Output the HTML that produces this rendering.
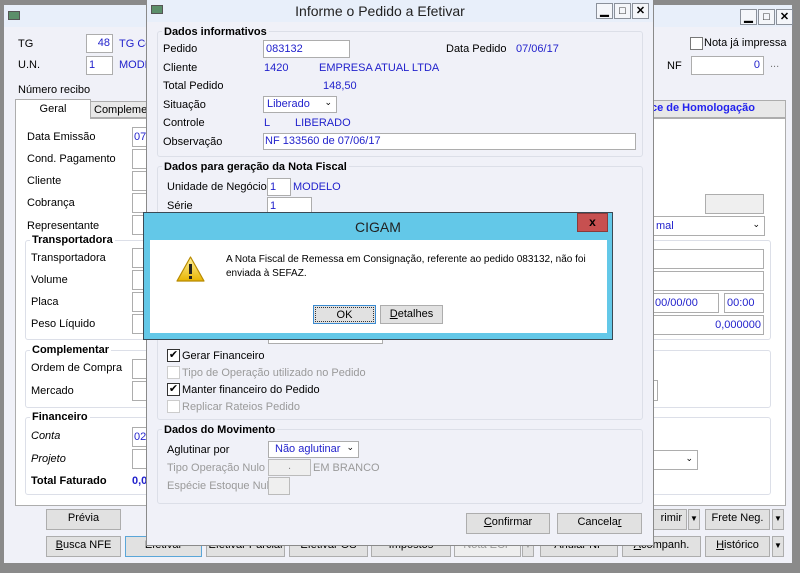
<!DOCTYPE html>
<html><head><meta charset="utf-8"><style>
*{box-sizing:border-box;margin:0;padding:0}
body{width:800px;height:573px;overflow:hidden;background:#8a8a8a;font-family:"Liberation Sans",sans-serif;font-size:11px;color:#000;position:relative}
.a{position:absolute;white-space:nowrap}
.b{color:#2222cc}
.g{color:#9a9a9a}
.in{position:absolute;background:#fff;border:1px solid #adadad}
.btn{position:absolute;background:#e1e1e1;border:1px solid #adadad;text-align:center;line-height:17px;font-size:11px}
.grp{position:absolute;border:1px solid #dcdfe8;border-radius:3px}
.gl{position:absolute;font-weight:bold;font-size:11px;padding:0 2px;background:inherit}
.wc{position:absolute;width:17px;height:16px;border:1px solid #8a909a;background:#f4f6fa;font-size:11px;font-weight:bold;text-align:center;line-height:14px;color:#000}
.cb{position:absolute;width:13px;height:13px;border:1px solid #333;background:#fff;font-size:11px;line-height:11px;text-align:center}
.dd{position:absolute;width:12px;background:#e1e1e1;border:1px solid #adadad;font-size:8px;text-align:center;line-height:17px}
</style></head><body>
<!-- back window -->
<div class="a" style="left:3px;top:4px;width:790px;height:560px;background:#f0f1f8;border:1px solid #8a8a8a"></div>
<div class="a" style="left:4px;top:5px;width:788px;height:22px;background:#e8effa"></div>
<div class="a" style="left:8px;top:11px;width:12px;height:9px;background:#5b8f6a;border:1px solid #555"></div>
<div class="wc" style="left:740px;top:9px">▁</div><div class="wc" style="left:758px;top:9px">□</div><div class="wc" style="left:776px;top:9px">✕</div>
<div class="a" style="left:18px;top:38px">TG</div>
<div class="in" style="left:86px;top:34px;width:27px;height:19px;text-align:right;padding:2px 2px" ><span class="b">48</span></div>
<div class="a b" style="left:119px;top:38px">TG Co</div>
<div class="a" style="left:18px;top:59px">U.N.</div>
<div class="in" style="left:86px;top:56px;width:27px;height:19px;padding:2px 2px"><span class="b">1</span></div>
<div class="a b" style="left:119px;top:59px">MODE</div>
<div class="a" style="left:18px;top:84px">Número recibo</div>
<div class="cb" style="left:690px;top:37px;border-color:#777"></div>
<div class="a" style="left:704px;top:37px">Nota já impressa</div>
<div class="a" style="left:667px;top:60px">NF</div>
<div class="in" style="left:691px;top:56px;width:73px;height:19px;text-align:right;padding:2px 3px"><span class="b">0</span></div>
<div class="a" style="left:770px;top:58px;color:#777">...</div>
<!-- tabs -->
<div class="a" style="left:15px;top:118px;width:771px;height:388px;background:#fff;border:1px solid #adadad"></div>
<div class="a" style="left:15px;top:99px;width:76px;height:20px;background:#fff;border:1px solid #adadad;border-bottom:none;text-align:center;line-height:18px">Geral</div>
<div class="a" style="left:90px;top:101px;width:60px;height:17px;background:#e8e8e8;border:1px solid #adadad;padding:2px 3px">Complement</div>
<div class="a" style="left:650px;top:100px;width:136px;height:18px;background:#e8e8e8;border:1px solid #adadad"></div>
<div class="a" style="left:651px;top:102px;color:#2222ee;font-weight:bold;font-size:11px">ce de Homologação</div>
<div class="a" style="left:27px;top:131px">Data Emissão</div><div class="in" style="left:132px;top:127px;width:20px;height:20px;padding:3px 1px"><span class="b">07</span></div>
<div class="a" style="left:27px;top:153px">Cond. Pagamento</div><div class="in" style="left:132px;top:149px;width:20px;height:20px"></div>
<div class="a" style="left:27px;top:175px">Cliente</div><div class="in" style="left:132px;top:171px;width:20px;height:20px"></div>
<div class="a" style="left:27px;top:197px">Cobrança</div><div class="in" style="left:132px;top:193px;width:20px;height:20px"></div>
<div class="a" style="left:27px;top:220px">Representante</div><div class="in" style="left:132px;top:215px;width:20px;height:20px"></div>
<div class="grp" style="left:25px;top:240px;width:746px;height:100px"></div>
<div class="gl" style="left:30px;top:234px;background:#fff">Transportadora</div>
<div class="a" style="left:31px;top:252px">Transportadora</div><div class="in" style="left:132px;top:248px;width:20px;height:20px"></div>
<div class="a" style="left:31px;top:274px">Volume</div><div class="in" style="left:132px;top:270px;width:20px;height:20px"></div>
<div class="a" style="left:31px;top:296px">Placa</div><div class="in" style="left:132px;top:292px;width:20px;height:20px"></div>
<div class="a" style="left:31px;top:318px">Peso Líquido</div><div class="in" style="left:132px;top:314px;width:20px;height:20px"></div>
<div class="grp" style="left:25px;top:350px;width:746px;height:58px"></div>
<div class="gl" style="left:30px;top:344px;background:#fff">Complementar</div>
<div class="a" style="left:31px;top:362px">Ordem de Compra</div><div class="in" style="left:132px;top:359px;width:20px;height:20px"></div>
<div class="a" style="left:31px;top:385px">Mercado</div><div class="in" style="left:132px;top:381px;width:20px;height:20px"></div>
<div class="grp" style="left:25px;top:417px;width:746px;height:78px"></div>
<div class="gl" style="left:30px;top:411px;background:#fff">Financeiro</div>
<div class="a" style="left:31px;top:430px;font-style:italic">Conta</div><div class="in" style="left:132px;top:427px;width:20px;height:20px;padding:3px 1px"><span class="b">02</span></div>
<div class="a" style="left:31px;top:453px;font-style:italic">Projeto</div><div class="in" style="left:132px;top:449px;width:20px;height:20px"></div>
<div class="a" style="left:31px;top:475px;font-weight:bold">Total Faturado</div>
<div class="a b" style="left:132px;top:475px;font-weight:bold">0,0</div>
<div class="a" style="left:705px;top:194px;width:59px;height:20px;background:#efefef;border:1px solid #adadad"></div>
<div class="in" style="left:640px;top:216px;width:125px;height:20px;padding:3px 15px"><span class="b">mal</span><span style="position:absolute;right:4px;top:2px;font-size:9px">⌄</span></div>
<div class="in" style="left:640px;top:249px;width:124px;height:20px"></div>
<div class="in" style="left:640px;top:271px;width:124px;height:20px"></div>
<div class="in" style="left:640px;top:293px;width:79px;height:20px;padding:3px 14px"><span class="b">00/00/00</span></div>
<div class="in" style="left:724px;top:293px;width:40px;height:20px;padding:3px 2px"><span class="b">00:00</span></div>
<div class="in" style="left:640px;top:315px;width:124px;height:20px;text-align:right;padding:3px 2px"><span class="b">0,000000</span></div>
<div class="in" style="left:640px;top:380px;width:18px;height:21px"></div>
<div class="in" style="left:640px;top:450px;width:58px;height:20px"><span style="position:absolute;right:4px;top:2px;font-size:9px">⌄</span></div>
<!-- bottom buttons -->
<div class="btn" style="left:46px;top:509px;width:75px;height:21px">Prévia</div>
<div class="btn" style="left:640px;top:509px;width:47px;height:21px;text-align:right;padding-right:4px">rimir</div>
<div class="dd" style="left:688px;top:509px;height:21px">▼</div>
<div class="btn" style="left:705px;top:509px;width:65px;height:21px">Frete Neg.</div>
<div class="dd" style="left:772px;top:509px;height:21px">▼</div>
<div class="btn" style="left:46px;top:536px;width:75px;height:21px"><u>B</u>usca NFE</div>
<div class="btn" style="left:125px;top:536px;width:77px;height:21px;border-color:#5aa6d8">Efetivar</div>
<div class="btn" style="left:206px;top:536px;width:79px;height:21px">Efetivar Parcial</div>
<div class="btn" style="left:289px;top:536px;width:79px;height:21px">Efetivar OS</div>
<div class="btn" style="left:371px;top:536px;width:80px;height:21px">Impostos</div>
<div class="btn" style="left:454px;top:536px;width:67px;height:21px;color:#999;background:#eee">Nota ECF</div>
<div class="dd" style="left:522px;top:536px;height:21px;color:#999">▼</div>
<div class="btn" style="left:540px;top:536px;width:78px;height:21px">Anular NF</div>
<div class="btn" style="left:622px;top:536px;width:79px;height:21px"><u>A</u>companh.</div>
<div class="btn" style="left:705px;top:536px;width:65px;height:21px"><u>H</u>istórico</div>
<div class="dd" style="left:772px;top:536px;height:21px">▼</div>

<!-- front dialog -->
<div class="a" style="left:146px;top:-1px;width:508px;height:547px;background:#f0f1f8;border:1px solid #8a8a8a"></div>
<div class="a" style="left:147px;top:0;width:506px;height:22px;background:#e8effa"></div>
<div class="a" style="left:151px;top:5px;width:12px;height:9px;background:#5b8f6a;border:1px solid #555"></div>
<div class="a" style="left:147px;top:3px;width:466px;text-align:center;font-size:14px;color:#222">Informe o Pedido a Efetivar</div>
<div class="wc" style="left:596px;top:3px">▁</div><div class="wc" style="left:614px;top:3px">□</div><div class="wc" style="left:632px;top:3px">✕</div>
<div class="grp" style="left:157px;top:31px;width:486px;height:126px"></div>
<div class="gl" style="left:162px;top:26px;background:#f0f1f8">Dados informativos</div>
<div class="a" style="left:163px;top:43px">Pedido</div>
<div class="in" style="left:263px;top:40px;width:87px;height:18px;padding:2px 2px"><span class="b">083132</span></div>
<div class="a" style="left:446px;top:43px">Data Pedido</div><div class="a b" style="left:516px;top:43px">07/06/17</div>
<div class="a" style="left:163px;top:62px">Cliente</div><div class="a b" style="left:264px;top:62px">1420</div><div class="a b" style="left:319px;top:62px">EMPRESA ATUAL LTDA</div>
<div class="a" style="left:163px;top:80px">Total Pedido</div><div class="a b" style="left:323px;top:80px">148,50</div>
<div class="a" style="left:163px;top:99px">Situação</div>
<div class="in" style="left:263px;top:96px;width:74px;height:17px;padding:1px 3px"><span class="b">Liberado</span><span style="position:absolute;right:4px;top:0;font-size:9px">⌄</span></div>
<div class="a" style="left:163px;top:117px">Controle</div><div class="a b" style="left:264px;top:117px">L</div><div class="a b" style="left:295px;top:117px">LIBERADO</div>
<div class="a" style="left:163px;top:136px">Observação</div>
<div class="in" style="left:263px;top:133px;width:373px;height:17px;padding:1px 1px"><span class="b">NF 133560 de 07/06/17</span></div>
<div class="grp" style="left:157px;top:166px;width:486px;height:254px"></div>
<div class="gl" style="left:162px;top:161px;background:#f0f1f8">Dados para geração da Nota Fiscal</div>
<div class="a" style="left:167px;top:181px">Unidade de Negócio</div>
<div class="in" style="left:267px;top:178px;width:24px;height:18px;padding:2px 2px"><span class="b">1</span></div><div class="a b" style="left:293px;top:181px">MODELO</div>
<div class="a" style="left:167px;top:200px">Série</div>
<div class="in" style="left:267px;top:197px;width:45px;height:18px;padding:2px 2px"><span class="b">1</span></div>
<div class="in" style="left:268px;top:330px;width:115px;height:14px"></div>
<div class="cb" style="left:167px;top:349px">✔</div><div class="a" style="left:182px;top:350px">Gerar Financeiro</div>
<div class="cb" style="left:167px;top:366px;border-color:#ccc"></div><div class="a g" style="left:182px;top:367px">Tipo de Operação utilizado no Pedido</div>
<div class="cb" style="left:167px;top:383px">✔</div><div class="a" style="left:182px;top:384px">Manter financeiro do Pedido</div>
<div class="cb" style="left:167px;top:400px;border-color:#ccc"></div><div class="a g" style="left:182px;top:401px">Replicar Rateios Pedido</div>
<div class="grp" style="left:157px;top:429px;width:486px;height:75px"></div>
<div class="gl" style="left:162px;top:424px;background:#f0f1f8">Dados do Movimento</div>
<div class="a" style="left:167px;top:444px">Aglutinar por</div>
<div class="in" style="left:268px;top:441px;width:91px;height:17px;padding:1px 6px"><span class="b">Não aglutinar</span><span style="position:absolute;right:4px;top:0;font-size:9px">⌄</span></div>
<div class="a g" style="left:167px;top:462px">Tipo Operação Nulo</div>
<div class="a" style="left:268px;top:459px;width:43px;height:17px;background:#efefef;border:1px solid #bbb;text-align:center;color:#888">.</div>
<div class="a g" style="left:313px;top:462px">EM BRANCO</div>
<div class="a g" style="left:167px;top:480px">Espécie Estoque Nula</div>
<div class="a" style="left:268px;top:477px;width:22px;height:18px;background:#efefef;border:1px solid #bbb"></div>
<div class="btn" style="left:466px;top:513px;width:84px;height:21px"><u>C</u>onfirmar</div>
<div class="btn" style="left:557px;top:513px;width:85px;height:21px">Cancela<u>r</u></div>

<!-- message box -->
<div class="a" style="left:143px;top:212px;width:470px;height:128px;background:#63c8e8;border:1px solid #3a4a55"></div>
<div class="a" style="left:144px;top:219px;width:468px;text-align:center;font-size:14px;color:#222">CIGAM</div>
<div class="a" style="left:577px;top:213px;width:31px;height:19px;background:#c75050;border:1px solid #8a3a3a;color:#000;font-weight:bold;text-align:center;line-height:16px;font-size:12px">x</div>
<div class="a" style="left:150px;top:240px;width:457px;height:93px;background:#fff"></div>
<svg class="a" style="left:175px;top:255px" width="31" height="29" viewBox="0 0 31 29"><defs><linearGradient id="w" x1="0" y1="0" x2="0" y2="1"><stop offset="0" stop-color="#fff3a0"/><stop offset="1" stop-color="#e8b400"/></linearGradient></defs><path d="M15.5 2 L29 26 L2 26 Z" fill="url(#w)" stroke="#b88a00" stroke-width="1.2" stroke-linejoin="round"/><rect x="14" y="9" width="3" height="10" fill="#222"/><rect x="14" y="21" width="3" height="3" fill="#222"/></svg>
<div class="a" style="left:226px;top:253px;line-height:14px;font-size:10px">A Nota Fiscal de Remessa em Consignação, referente ao pedido 083132, não foi<br>enviada à SEFAZ.</div>
<div class="btn" style="left:313px;top:305px;width:63px;height:19px;border:1px solid #3b8bd0;line-height:15px"><div style="border:1px dotted #333;margin:1px;height:15px">OK</div></div>
<div class="btn" style="left:380px;top:305px;width:63px;height:19px;line-height:17px"><u>D</u>etalhes</div>
</body></html>
